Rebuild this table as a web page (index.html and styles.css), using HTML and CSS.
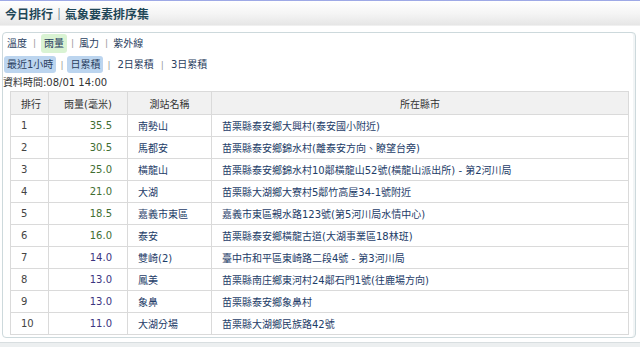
FILE: index.html
```html
<!DOCTYPE html>
<html lang="zh-Hant">
<head>
<meta charset="utf-8">
<title>今日排行</title>
<link rel="stylesheet" href="styles.css">
</head>
<body>
<div class="topbar"><h1 class="title">今日排行｜氣象要素排序集</h1></div>
<div class="panel">
  <div class="tabs tabs-main">
    <span class="tab">溫度</span><span class="sep">|</span>
    <span class="tab tab-green">雨量</span><span class="sep">|</span>
    <span class="tab">風力</span><span class="sep">|</span>
    <span class="tab">紫外線</span>
  </div>
  <div class="tabs tabs-sub">
    <span class="tab tab-blue">最近1小時</span><span class="sep">|</span>
    <span class="tab tab-blue">日累積</span><span class="sep">|</span>
    <span class="tab">2日累積</span><span class="sep">|</span>
    <span class="tab">3日累積</span>
  </div>
  <div class="datatime">資料時間:08/01 14:00</div>
  <table class="rank">
    <colgroup><col class="c1"><col class="c2"><col class="c3"><col class="c4"></colgroup>
    <thead>
      <tr><th>排行</th><th>雨量(毫米)</th><th>測站名稱</th><th>所在縣市</th></tr>
    </thead>
    <tbody>
      <tr><td>1</td><td class="val g">35.5</td><td class="st">南勢山</td><td class="st">苗栗縣泰安鄉大興村(泰安國小附近)</td></tr>
      <tr><td>2</td><td class="val g">30.5</td><td class="st">馬都安</td><td class="st">苗栗縣泰安鄉錦水村(離泰安方向、瞭望台旁)</td></tr>
      <tr><td>3</td><td class="val g">25.0</td><td class="st">橫龍山</td><td class="st">苗栗縣泰安鄉錦水村10鄰橫龍山52號(橫龍山派出所) - 第2河川局</td></tr>
      <tr><td>4</td><td class="val g">21.0</td><td class="st">大湖</td><td class="st">苗栗縣大湖鄉大寮村5鄰竹高屋34-1號附近</td></tr>
      <tr><td>5</td><td class="val g">18.5</td><td class="st">嘉義市東區</td><td class="st">嘉義市東區親水路123號(第5河川局水情中心)</td></tr>
      <tr><td>6</td><td class="val g">16.0</td><td class="st">泰安</td><td class="st">苗栗縣泰安鄉橫龍古道(大湖事業區18林班)</td></tr>
      <tr><td>7</td><td class="val p">14.0</td><td class="st">雙崎(2)</td><td class="st">臺中市和平區東崎路二段4號 - 第3河川局</td></tr>
      <tr><td>8</td><td class="val p">13.0</td><td class="st">鳳美</td><td class="st">苗栗縣南庄鄉東河村24鄰石門1號(往鹿場方向)</td></tr>
      <tr><td>9</td><td class="val p">13.0</td><td class="st">象鼻</td><td class="st">苗栗縣泰安鄉象鼻村</td></tr>
      <tr><td>10</td><td class="val p">11.0</td><td class="st">大湖分場</td><td class="st">苗栗縣大湖鄉民族路42號</td></tr>
    </tbody>
  </table>
</div>
<div class="footer"></div>
</body>
</html>
```
FILE: styles.css
```css
html, body {
  margin: 0;
  padding: 0;
  background: #ffffff;
}
body {
  width: 640px;
  height: 347px;
  overflow: hidden;
  font-family: "DejaVu Sans", "Noto Sans CJK TC", sans-serif;
  font-size: 10px;
  color: #333333;
}
.topbar {
  border-top: 1px solid #9ea9e6;
  height: 24px;
  background: linear-gradient(#ffffff, #f4f4f4 55%, #e6e6e6);
  border-bottom: 1px solid #f0f0f0;
  display: flex;
  align-items: center;
  padding-left: 5px;
}
.title {
  margin: 0;
  font-size: 12px;
  font-weight: bold;
  color: #1f4758;
  letter-spacing: 0;
}
.panel {
  margin: 6px 4px 0 2px;
  border: 1px solid #cdd9dc;
  border-radius: 4px;
  box-shadow: inset -2px 0 0 #f2f5f6;
  padding: 0 0 2px 0;
  height: 302px;
}
.tabs {
  display: flex;
  align-items: center;
  color: #2a4060;
}
.tabs-main {
  height: 20px;
  padding-left: 4px;
}
.tabs-sub {
  height: 17px;
  margin-top: 3px;
  padding-left: 1px;
}
.tab {
  line-height: 17px;
  padding: 0 3px;
  border-radius: 3px;
}
.tabs-main .tab {
  padding: 0;
}
.tabs-main .tab-green {
  background: #d9f3d3;
  line-height: 19px;
  padding: 0 3px;
}
.tab-blue {
  background: #bcd5ef;
}
.sep {
  color: #9a9a9a;
  margin: 0 4px;
  font-size: 9px;
}
.tabs-main .sep {
  margin: 0 5px 0 6px;
}
.tabs-main .tab-green + .sep {
  margin-left: 4px;
}
.datatime {
  height: 18px;
  line-height: 20px;
  color: #333333;
  margin-left: 0;
}
.rank {
  margin-left: 7px;
  border-collapse: collapse;
  width: 618px;
  table-layout: fixed;
}
.c1 { width: 38px; }
.c2 { width: 79px; }
.c3 { width: 84px; }
.c4 { width: 417px; }
.rank th, .rank td {
  border: 1px solid #dadada;
  height: 21px;
  padding: 0 10px;
  white-space: nowrap;
  overflow: hidden;
}
.rank th {
  background: #f1f1f1;
  font-weight: normal;
  color: #333333;
  text-align: center;
  height: 22px;
}
.rank td {
  color: #444444;
  text-align: left;
}
.rank td.val {
  text-align: right;
  padding-right: 15px;
}
.rank td.g { color: #3f6e32; }
.rank td.p { color: #3b357f; }
.rank td.st { color: #1d3c68; }
.footer {
  margin-top: 4px;
  border-top: 1px solid #d8dee0;
  height: 10px;
  background: #eceff0;
}
```
